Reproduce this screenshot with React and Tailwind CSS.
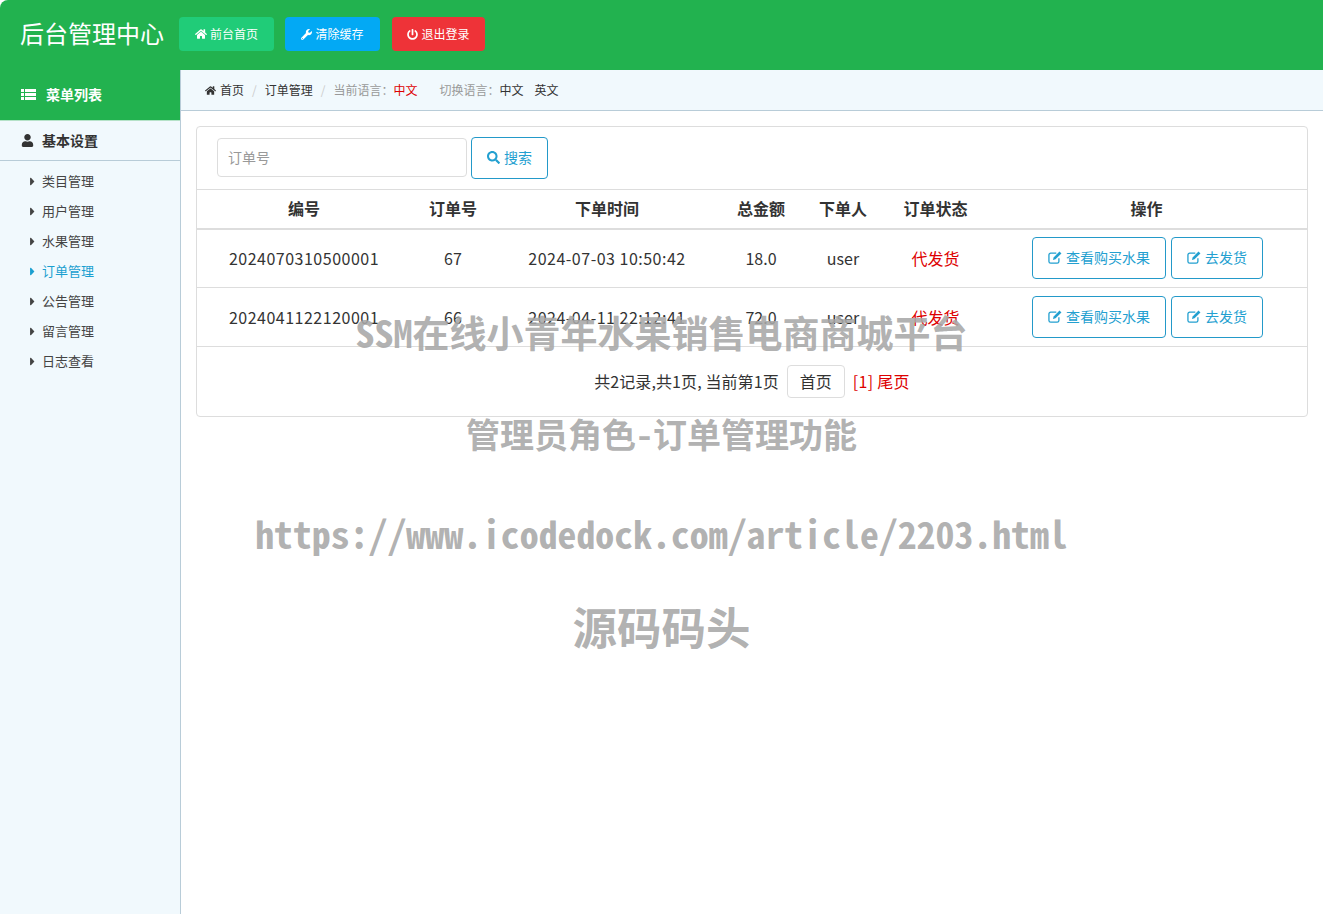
import React from 'react';
import { FaHome, FaWrench, FaPowerOff, FaUser, FaCaretRight, FaSearch } from 'react-icons/fa';

const menuItems = ['类目管理', '用户管理', '水果管理', '订单管理', '公告管理', '留言管理', '日志查看'];

const orders = [
  { no: '2024070310500001', id: '67', time: '2024-07-03 10:50:42', total: '18.0', user: 'user', status: '代发货' },
  { no: '2024041122120001', id: '66', time: '2024-04-11 22:12:41', total: '72.0', user: 'user', status: '代发货' },
];

// fa-th-list as it renders at this small size
const MenuIcon = () => (
  <svg width="15" height="11" viewBox="0 0 15 11" fill="currentColor" className="mr-[10px]">
    <rect x="0" y="0" width="3" height="3" />
    <rect x="4" y="0" width="11" height="3" />
    <rect x="0" y="4" width="3" height="3" />
    <rect x="4" y="4" width="11" height="3" />
    <rect x="0" y="8" width="3" height="3" />
    <rect x="4" y="8" width="11" height="3" />
  </svg>
);

// fa-pencil-square-o
const EditIcon = () => (
  <svg width="14" height="13" viewBox="0 0 16 15" fill="none" stroke="currentColor" strokeWidth="1.5">
    <path d="M9.5 2.5H3a2 2 0 0 0-2 2V12a2 2 0 0 0 2 2h7.5a2 2 0 0 0 2-2V8.5" />
    <path d="M13.2 0.6l2.2 2.2L8.6 9.6l-3 .8.8-3z" fill="currentColor" stroke="none" />
  </svg>
);

const App = () => {
  return (
    <div className="relative min-h-[914px] bg-white text-[#333] font-['Noto_Sans_CJK_SC','Noto_Sans',sans-serif] overflow-hidden">
      {/* top bar */}
      <header className="h-[70px] bg-[#22b24f] rounded-tl-lg flex items-center pl-5 pb-[2px]">
        <h1 className="w-[159px] mb-[2px] text-[24px] leading-none font-normal text-white whitespace-nowrap">后台管理中心</h1>
        <div className="flex gap-[11px]">
          <a className="w-[95px] h-[34px] bg-[#20cc78] rounded text-white text-[12px] flex items-center justify-center gap-[3px]">
            <FaHome className="text-[12px]" /> 前台首页
          </a>
          <a className="w-[95px] h-[34px] bg-[#03a9f4] rounded text-white text-[12px] flex items-center justify-center gap-[3px]">
            <FaWrench className="text-[11px]" /> 清除缓存
          </a>
          <a className="ml-px w-[93px] h-[34px] bg-[#ee3338] rounded text-white text-[12px] flex items-center justify-center gap-[3px]">
            <FaPowerOff className="text-[11px]" /> 退出登录
          </a>
        </div>
      </header>

      <div className="flex min-h-[844px]">
        {/* sidebar */}
        <aside className="w-[181px] shrink-0 bg-[#f1f9fd] border-r border-[#b8ccd8]">
          <div className="h-[50px] bg-[#22b24f] flex items-center pl-[21px] pb-[2px] text-white text-[14px] font-bold">
            <MenuIcon /> 菜单列表
          </div>
          <div className="h-[41px] border-t border-[#b5e2c8] border-b border-b-[#b8ccd8] flex items-center pl-[21px] text-[14px] font-bold text-[#333]">
            <FaUser className="text-[13px] mr-[8px]" /> 基本设置
          </div>
          <ul className="pt-[5px]">
            {menuItems.map((item) => (
              <li
                key={item}
                className={`h-[30px] flex items-center pl-[26px] text-[13px] ${item === '订单管理' ? 'text-[#1a9fd0]' : 'text-[#444]'}`}
              >
                <FaCaretRight className="text-[13px] mr-[3px]" /> {item}
              </li>
            ))}
          </ul>
        </aside>

        {/* main */}
        <main className="flex-1 min-w-0">
          <div className="h-[41px] bg-[#f1f9fd] border-b border-[#b8ccd8] flex items-center pl-6 text-[12px] text-[#333] whitespace-nowrap">
            <FaHome className="text-[11px] mr-[4px]" />
            <span>首页</span>
            <span className="mx-[8px] text-[#ccc]">/</span>
            <span>订单管理</span>
            <span className="mx-[8px] text-[#ccc]">/</span>
            <span className="text-[#999]">当前语言：</span>
            <span className="text-[#d00]">中文</span>
            <span className="ml-[22px] text-[#999]">切换语言：</span>
            <span>中文</span>
            <span className="ml-[11px]">英文</span>
          </div>

          <section className="mx-[15px] mt-[15px] h-[291px] border border-[#ddd] rounded">
            <div className="h-[62px] flex items-start pt-[10px] pl-5 gap-1">
              <input
                placeholder="订单号"
                className="mt-px w-[250px] h-[39px] pl-[10px] pb-[2px] border border-[#ddd] rounded text-[14px] placeholder:text-[#999] bg-white"
              />
              <button className="w-[77px] h-[42px] pb-[2px] border border-[#2399c9] rounded text-[#23a0d0] text-[14px] flex items-center justify-center gap-[4px]">
                <FaSearch className="text-[13px]" /> 搜索
              </button>
            </div>

            <table className="w-full table-fixed border-collapse text-[16px] text-center text-[#333]">
              <colgroup>
                <col className="w-[214px]" />
                <col className="w-[84px]" />
                <col className="w-[224px]" />
                <col className="w-[84px]" />
                <col className="w-[80px]" />
                <col className="w-[105px]" />
                <col />
              </colgroup>
              <thead>
                <tr className="h-[39px] border-t border-[#ddd] border-b-2 border-b-[#ddd]">
                  {['编号', '订单号', '下单时间', '总金额', '下单人', '订单状态', '操作'].map((h) => (
                    <th key={h} className="font-bold pb-[2px] last:pr-[2px]">{h}</th>
                  ))}
                </tr>
              </thead>
              <tbody>
                {orders.map((order) => (
                  <tr key={order.id} className="h-[59px] border-b border-[#ddd]">
                    <td className="tracking-[0.5px]">{order.no}</td>
                    <td>{order.id}</td>
                    <td className="tracking-[0.5px]">{order.time}</td>
                    <td>{order.total}</td>
                    <td>{order.user}</td>
                    <td className="text-[#d00]">{order.status}</td>
                    <td>
                      <div className="flex justify-center gap-[5px]">
                        <button className="w-[134px] h-[42px] pb-[2px] border border-[#2399c9] rounded text-[#23a0d0] text-[14px] flex items-center justify-center gap-[4px]">
                          <EditIcon /> 查看购买水果
                        </button>
                        <button className="w-[92px] h-[42px] pb-[2px] border border-[#2399c9] rounded text-[#23a0d0] text-[14px] flex items-center justify-center gap-[4px]">
                          <EditIcon /> 去发货
                        </button>
                      </div>
                    </td>
                  </tr>
                ))}
              </tbody>
            </table>

            <div className="h-[69px] flex items-center justify-center text-[16px] gap-2 pb-[1px] text-[#333]">
              <span className="tracking-[0.1px]">共2记录,共1页, 当前第1页</span>
              <span className="w-[58px] h-[33px] border border-[#ddd] rounded-sm flex items-center justify-center">首页</span>
              <span className="text-[#d00] tracking-[0.3px]">[1] 尾页</span>
            </div>
          </section>
        </main>
      </div>

      {/* burned-in watermark */}
      <div className="absolute left-0 right-0 top-[308px] flex flex-col items-center font-bold text-[#a8a8a8]/90 whitespace-nowrap pointer-events-none font-['Noto_Sans_Mono_CJK_SC','Noto_Sans_CJK_SC',monospace]">
        <div className="h-[48px] leading-[48px] text-[37px]"><span className="text-[38px]">SSM</span>在线小青年水果销售电商商城平台</div>
        <div className="mt-[54px] h-[48px] leading-[48px] text-[34px]">管理员角色-订单管理功能</div>
        <div className="mt-[51px] h-[48px] leading-[48px] text-[37.8px]">https://www.icodedock.com/article/2203.html</div>
        <div className="mt-[41px] h-[56px] leading-[56px] text-[44.5px]">源码码头</div>
      </div>
    </div>
  );
};

export default App;
